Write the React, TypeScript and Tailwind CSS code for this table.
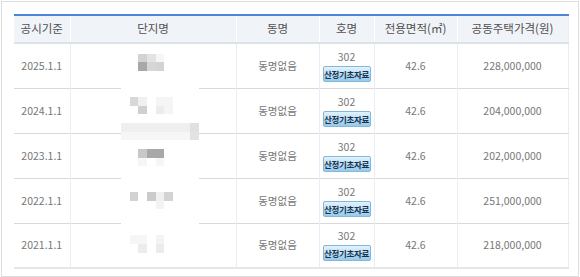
import React from "react";

const rows = [
  { date: "2025.1.1", price: "228,000,000", first: true },
  { date: "2024.1.1", price: "204,000,000" },
  { date: "2023.1.1", price: "202,000,000" },
  { date: "2022.1.1", price: "251,000,000" },
  { date: "2021.1.1", price: "218,000,000" },
];

// blurred 단지명 mosaic: [row, col, colour class]
const mosaic: [number, number, string][] = [
  [1, 2, "bg-[#d3d3d3]"], [1, 3, "bg-[#e3e3e3]"], [1, 4, "bg-[#f6f6f6]"],
  [2, 2, "bg-[#a8a8a8]"], [2, 3, "bg-[#d6d6d6]"], [2, 4, "bg-[#d3d3d3]"],
  [6, 1, "bg-[#d8d8d8]"], [6, 2, "bg-[#f0f0f0]"], [6, 4, "bg-[#f5f5f5]"], [6, 5, "bg-[#f5f5f5]"],
  [7, 2, "bg-[#d0d0d0]"], [7, 4, "bg-[#ececec]"], [7, 5, "bg-[#f5f5f5]"],
  [9, 0, "bg-[#efefef]"], [9, 1, "bg-[#efefef]"], [9, 2, "bg-[#efefef]"], [9, 3, "bg-[#efefef]"],
  [9, 4, "bg-[#efefef]"], [9, 5, "bg-[#efefef]"], [9, 6, "bg-[#efefef]"], [9, 7, "bg-[#efefef]"], [9, 8, "bg-[#e0e0e0]"],
  [10, 0, "bg-[#f6f6f6]"], [10, 1, "bg-[#f6f6f6]"], [10, 2, "bg-[#f6f6f6]"], [10, 3, "bg-[#f6f6f6]"],
  [10, 4, "bg-[#f6f6f6]"], [10, 5, "bg-[#f6f6f6]"], [10, 6, "bg-[#f6f6f6]"], [10, 7, "bg-[#f6f6f6]"], [10, 8, "bg-[#e3e3e3]"],
  [12, 2, "bg-[#c8c8c8]"], [12, 3, "bg-[#a8a8a8]"], [12, 4, "bg-[#a8a8a8]"],
  [13, 2, "bg-[#f6f6f6]"], [13, 4, "bg-[#f6f6f6]"],
  [17, 1, "bg-[#d2d2d2]"], [17, 3, "bg-[#cbcbcb]"], [17, 4, "bg-[#f0f0f0]"], [17, 5, "bg-[#d3d3d3]"],
  [18, 4, "bg-[#f3f3f3]"],
  [22, 1, "bg-[#f6f6f6]"], [22, 2, "bg-[#f6f6f6]"], [22, 4, "bg-[#f3f3f3]"],
  [23, 2, "bg-[#ececec]"], [23, 4, "bg-[#ececec]"],
];

function Mosaic() {
  const cells: string[] = Array(9 * 25).fill("bg-white");
  mosaic.forEach(([r, c, cls]) => (cells[r * 9 + c] = cls));
  return (
    <div className="absolute left-[107px] top-[31px] grid grid-cols-9 w-[78px]">
      {cells.map((cls, i) => (
        <div key={i} className={`h-[8.667px] ${cls}`} />
      ))}
    </div>
  );
}

export default function App() {
  return (
    <div className="w-[580px] h-[277px] bg-white p-px font-['Noto_Sans_CJK_KR',sans-serif]">
      <div className="w-[578px] h-[276px] border border-[#dedede] pl-3 pt-3">
        <div className="relative w-[554px]">
          <table className="table-fixed border-collapse w-[554px] border-r border-[#e8eef6]">
            <colgroup>
              <col className="w-[56px]" />
              <col className="w-[166px]" />
              <col className="w-[83px]" />
              <col className="w-[55px]" />
              <col className="w-[83px]" />
              <col className="w-[111px]" />
            </colgroup>
            <thead>
              <tr className="h-[28px] bg-[#f0f3f8] border-t-2 border-[#4d86d9] border-b-2 border-b-[#dde2e8] text-[11.5px] text-[#505050]">
                <th className="font-normal border-r border-white">공시기준</th>
                <th className="font-normal border-r border-white">단지명</th>
                <th className="font-normal border-r border-white">동명</th>
                <th className="font-normal border-r border-white">호명</th>
                <th className="font-normal border-r border-white">전용면적(㎡)</th>
                <th className="font-normal">공동주택가격(원)</th>
              </tr>
            </thead>
            <tbody className="text-[10.5px] text-[#777] text-center">
              {rows.map((r, i) => (
                <tr
                  key={r.date}
                  className={`h-[45px] border-b ${
                    i === rows.length - 1 ? "border-b-2 border-[#e6e6e6]" : "border-[#d9d9d9]"
                  }`}
                >
                  <td className="border-r border-[#e8eef6]">{r.date}</td>
                  <td className="border-r border-[#e8eef6]"></td>
                  <td className="border-r border-[#e8eef6]">동명없음</td>
                  <td className="border-r border-[#e8eef6]">
                    <div className="flex flex-col items-center">
                      <span className="leading-[13px]">302</span>
                      <span className="mt-[3px] w-[48px] h-[16px] rounded-[2px] border border-[#86b6d8] bg-gradient-to-b from-[#e2f3fd] to-[#94cbec] text-[8.5px] font-bold text-[#17324d] leading-[14px] tracking-[-0.3px]">
                        산정기초자료
                      </span>
                    </div>
                  </td>
                  <td className="border-r border-[#e8eef6]">42.6</td>
                  <td>{r.price}</td>
                </tr>
              ))}
            </tbody>
          </table>
          <Mosaic />
        </div>
      </div>
    </div>
  );
}
